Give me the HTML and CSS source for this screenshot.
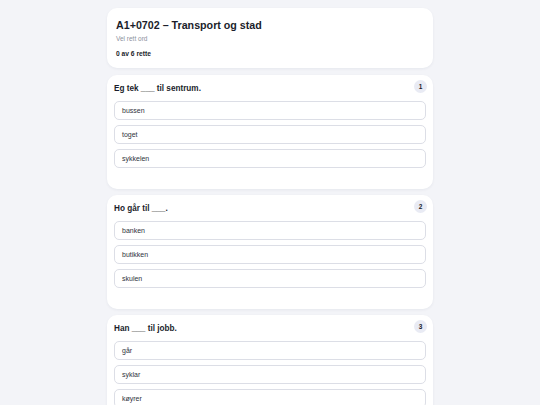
FILE: index.html
```html
<!DOCTYPE html>
<html lang="nn">
<head>
    <meta charset="UTF-8">
    <meta name="viewport" content="width=device-width, initial-scale=1.0">
    <title>A1+0702 – Transport og stad</title>
    <link rel="stylesheet" href="styles.css">
</head>
<body>
    <div class="wrap">
        <div class="card head-card">
            <h1>A1+0702 – Transport og stad</h1>
            <div class="sub">Vel rett ord</div>
            <div class="score">0 av 6 rette</div>
        </div>

        <div class="card q-card">
            <span class="badge">1</span>
            <div class="question">Eg tek ___ til sentrum.</div>
            <div class="options">
                <button class="opt">bussen</button>
                <button class="opt">toget</button>
                <button class="opt">sykkelen</button>
            </div>
            <div class="feedback"></div>
        </div>

        <div class="card q-card">
            <span class="badge">2</span>
            <div class="question">Ho går til ___.</div>
            <div class="options">
                <button class="opt">banken</button>
                <button class="opt">butikken</button>
                <button class="opt">skulen</button>
            </div>
            <div class="feedback"></div>
        </div>

        <div class="card q-card">
            <span class="badge">3</span>
            <div class="question">Han ___ til jobb.</div>
            <div class="options">
                <button class="opt">går</button>
                <button class="opt">syklar</button>
                <button class="opt">køyrer</button>
            </div>
            <div class="feedback"></div>
        </div>
    </div>
</body>
</html>
```

FILE: styles.css
```css
body {
    font-family: "Liberation Sans", Arial, sans-serif;
    background-color: #f3f4f8;
    color: #1b1e2b;
    margin: 0;
    padding: 0;
}
.wrap {
    width: 326px;
    margin: 8px auto;
    display: flex;
    flex-direction: column;
    gap: 6px;
}
.card {
    background: #fff;
    border-radius: 10px;
    box-shadow: 0 1px 3px rgba(20, 30, 60, 0.06);
}
.head-card {
    padding: 10px 9px;
    margin-bottom: 1px;
}
h1 {
    font-size: 10.7px;
    line-height: 14px;
    margin: 0;
    color: #1b1e2b;
}
.sub {
    font-size: 6.5px;
    line-height: 9px;
    margin-top: 2px;
    color: #8b909c;
}
.score {
    font-size: 6.7px;
    line-height: 9px;
    margin-top: 6px;
    font-weight: bold;
}
.q-card {
    position: relative;
    padding: 9px 7px 0;
}
.badge {
    position: absolute;
    top: 5px;
    right: 6px;
    width: 13px;
    height: 13px;
    border-radius: 50%;
    background: #e9ebf4;
    font-size: 6.5px;
    font-weight: bold;
    display: flex;
    align-items: center;
    justify-content: center;
}
.question {
    font-size: 8.2px;
    line-height: 10px;
    font-weight: bold;
    margin-bottom: 7px;
}
.options {
    display: flex;
    flex-direction: column;
    gap: 5px;
}
.opt {
    height: 19px;
    text-align: left;
    padding: 0 7px;
    background: #fff;
    border: 1px solid #dcdee6;
    border-radius: 5px;
    font-family: inherit;
    font-size: 7px;
    color: #30333e;
    cursor: pointer;
}
.feedback {
    height: 21px;
}
```
